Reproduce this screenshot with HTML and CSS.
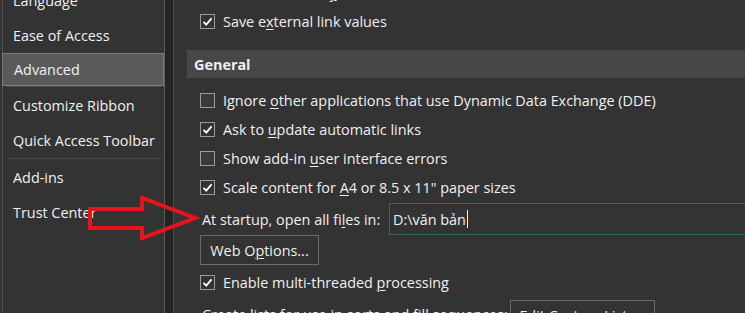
FILE: index.html
```html
<!DOCTYPE html>
<html lang="en">
<head>
  <meta charset="UTF-8" />
  <title>Excel Options - Advanced</title>
  <link rel="stylesheet" href="styles.css">
</head>
<body>
  <div class="window">
    <nav class="sidebar">
      <div class="item">Language</div>
      <div class="item">Ease of Access</div>
      <div class="item selected">Advanced</div>
      <div class="sep"></div>
      <div class="item">Customize Ribbon</div>
      <div class="item">Quick Access Toolbar</div>
      <div class="sep"></div>
      <div class="item">Add-ins</div>
      <div class="item">Trust Center</div>
    </nav>
    <div class="split"></div>
    <main class="content">
      <div class="row"><span class="box checked"></span><span>Use 1904 date s<u>y</u>stem</span></div>
      <div class="row"><span class="box checked"></span><span>Save e<u>x</u>ternal link values</span></div>

      <h2 class="section">General</h2>

      <div class="row"><span class="box"></span><span>Ignore <u>o</u>ther applications that use Dynamic Data Exchange (DDE)</span></div>
      <div class="row"><span class="box checked"></span><span>Ask to <u>u</u>pdate automatic links</span></div>
      <div class="row"><span class="box"></span><span>Show add-in <u>u</u>ser interface errors</span></div>
      <div class="row"><span class="box checked"></span><span>Scale content for <u>A</u>4 or 8.5 x 11" paper sizes</span></div>
      <div class="startup">
        <span class="label">At startup, open all fi<u>l</u>es in:</span>
        <div class="field">D:\văn bản<span class="caret"></span></div>
      </div>
      <div class="btn-row"><button class="btn">Web O<u>p</u>tions...</button></div>
      <div class="row spaced"><span class="box checked"></span><span>Enable multi-threaded <u>p</u>rocessing</span></div>
      <div class="lists">
        <span class="label">Create lists for use in sorts and fill sequences:</span>
        <button class="btn wide">Edit Custo<u>m</u> Lists...</button>
      </div>
    </main>
  </div>

  <svg class="arrow" width="114" height="48" viewBox="0 0 114 48">
    <path d="M4 15 H56 V4 L109 24 L56 44 V34 H4 Z" fill="none" stroke="#e8141c" stroke-width="4" />
  </svg>
</body>
</html>
```

FILE: styles.css
```css
* {
  box-sizing: border-box;
}
body {
  margin: 0;
  width: 745px;
  height: 313px;
  overflow: hidden;
  background-color: #333333;
  color: #f0f0f0;
  font-family: 'Open Sans', sans-serif;
  font-size: 14.4px;
  position: relative;
}
u {
  text-underline-offset: 2px;
  text-decoration-thickness: 1px;
}
.window {
  display: flex;
  height: 313px;
}
.sidebar {
  width: 163px;
  flex-shrink: 0;
  margin-left: 2px;
  border-left: 1px solid #525252;
  border-right: 1px solid #5e5e5e;
  background-color: #333333;
  display: flex;
  flex-direction: column;
  margin-top: -17px;
}
.sidebar > * {
  flex-shrink: 0;
}
.item {
  height: 35px;
  display: flex;
  align-items: center;
  padding-left: 10px;
  white-space: nowrap;
}
.item.selected {
  height: 33px;
  margin-left: -1px;
  background-color: #5a5a5a;
  border: 1px solid #7c7c7c;
  padding-left: 11px;
}
.sep {
  height: 2px;
  margin: 0 3px;
  border-top: 1px solid #474747;
}
.split {
  width: 9px;
  flex-shrink: 0;
  background-color: #232323;
  border-right: 1px solid #4a4a4a;
}
.content {
  flex: 1;
  display: flex;
  flex-direction: column;
  margin-top: -22px;
  padding-left: 13px;
  min-width: 0;
}
.content > * {
  flex-shrink: 0;
}
.row {
  height: 29px;
  display: flex;
  align-items: center;
  gap: 8px;
  padding-left: 13px;
  white-space: nowrap;
}
.row.spaced {
  margin-top: 3px;
}
.box {
  width: 15px;
  height: 15px;
  flex-shrink: 0;
  border: 1px solid #9c9c9c;
  background-color: #3a3a3a;
}
.box.checked {
  background-color: #333333;
  background-image: url("data:image/svg+xml,%3Csvg xmlns='http://www.w3.org/2000/svg' width='13' height='13' viewBox='0 0 13 13'%3E%3Cpath d='M2.5 6.8 L5.2 9.6 L10.6 3.4' fill='none' stroke='%23ffffff' stroke-width='1.8'/%3E%3C/svg%3E");
  background-repeat: no-repeat;
  background-position: center;
}
.section {
  margin: 14px 0 8px 0;
  height: 28px;
  display: flex;
  align-items: center;
  padding-left: 7px;
  background-color: #474747;
  font-size: 14.4px;
  font-weight: 700;
}
.startup {
  height: 32px;
  display: flex;
  align-items: center;
  padding-left: 15px;
  margin-top: 1px;
  white-space: nowrap;
}
.startup .label {
  width: 187px;
  flex-shrink: 0;
}
.field {
  flex: 1;
  height: 32px;
  margin-right: -4px;
  border: 1px solid #336b52;
  display: flex;
  align-items: center;
  padding-left: 3px;
}
.caret {
  width: 1px;
  height: 18px;
  background-color: #f0f0f0;
  margin-left: 1px;
}
.btn-row {
  display: flex;
  padding-left: 13px;
}
.btn {
  height: 30px;
  width: 119px;
  background-color: #333333;
  border: 1px solid #6a6a6a;
  color: #f0f0f0;
  font-family: inherit;
  font-size: 14.4px;
  padding: 0;
}
.lists {
  height: 30px;
  display: flex;
  align-items: flex-start;
  padding-left: 15px;
  margin-top: 3px;
  white-space: nowrap;
}
.lists .label {
  width: 308px;
  flex-shrink: 0;
  padding-top: 5px;
}
.btn.wide {
  width: 145px;
  margin-top: 0;
}
.arrow {
  position: absolute;
  left: 86px;
  top: 194px;
}
```
